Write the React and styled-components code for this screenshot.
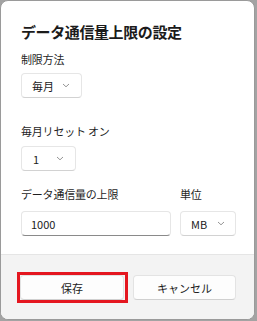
import React from "react";
import styled, { createGlobalStyle } from "styled-components";

const Global = createGlobalStyle`
  html, body { margin: 0; padding: 0; }
  body {
    background: #a3a3a3;
    font-family: "Noto Sans CJK JP", "Noto Sans", sans-serif;
    color: #1b1b1b;
  }
`;

const Dialog = styled.div`
  box-sizing: border-box;
  width: 255px;
  height: 320px;
  background: #ffffff;
  border: 1px solid #9a9a9a;
  border-radius: 8px;
  overflow: hidden;
  display: flex;
  flex-direction: column;
`;

const Body = styled.div`
  flex: 1;
  padding: 20px 18px 0 20px;
  display: flex;
  flex-direction: column;
`;

const Title = styled.h1`
  margin: 0 0 10px;
  font-size: 15px;
  line-height: 21px;
  font-weight: 600;
  letter-spacing: -0.4px;
`;

const Label = styled.div`
  font-size: 11px;
  line-height: 15px;
  color: #1f1f1f;
  margin-bottom: ${(p) => p.$mb || 6}px;
  letter-spacing: -0.2px;
`;

const Field = styled.div`
  box-sizing: border-box;
  width: ${(p) => p.$w}px;
  height: 25px;
  background: #fff;
  border: 1px solid #e6e6e6;
  border-bottom-color: #d2d2d2;
  border-radius: 4px;
  display: flex;
  align-items: center;
  justify-content: space-between;
  padding: 0 ${(p) => p.$pr || 11}px 0 ${(p) => p.$pl || 10}px;
  font-size: 11px;
  color: #1b1b1b;
  margin-bottom: ${(p) => p.$mb || 0}px;
`;

const Input = styled(Field)`
  border-bottom: 1px solid #8a8a8a;
  padding-left: 9px;
`;

const Group = styled.div`
  display: flex;
  flex-direction: column;
  align-items: flex-start;
`;

const Row = styled.div`
  display: grid;
  grid-template-columns: 150px 56px;
  column-gap: 9px;
`;

const Footer = styled.div`
  height: 65px;
  background: #f3f3f3;
  border-top: 1px solid #e5e5e5;
  box-sizing: border-box;
  display: flex;
  align-items: flex-start;
  gap: 5px;
  padding: 17px 0 0 16px;
`;

const FocusRing = styled.div`
  border: 3px solid #e4161f;
  padding: 0 1px 0 0;
  display: flex;
`;

const Button = styled.button`
  box-sizing: border-box;
  width: ${(p) => p.$w}px;
  height: 25px;
  margin-top: ${(p) => p.$mt || 0}px;
  background: #fdfdfd;
  border: 1px solid #e3e3e3;
  border-bottom-color: #d0d0d0;
  border-radius: 4px;
  font-family: inherit;
  font-size: 11px;
  color: #1b1b1b;
  padding: 0;
`;

const Chevron = () => (
  <svg width="8" height="5" viewBox="0 0 8 5">
    <path d="M1 1 L4 3.8 L7 1" fill="none" stroke="#7a7a7a" strokeWidth="0.8" />
  </svg>
);

export default function App() {
  return (
    <>
      <Global />
      <Dialog>
        <Body>
          <Title>データ通信量上限の設定</Title>
          <Group>
            <Label>制限方法</Label>
            <Field $w={61} $mb={26}>
              <span>毎月</span>
              <Chevron />
            </Field>
            <Label $mb={7}>毎月リセット オン</Label>
            <Field $w={55} $mb={16} $pl={11}>
              <span>1</span>
              <Chevron />
            </Field>
          </Group>
          <Row>
            <Label $mb={9}>データ通信量の上限</Label>
            <Label $mb={9}>単位</Label>
            <Input $w={150}>1000</Input>
            <Field $w={56} $pr={10}>
              <span>MB</span>
              <Chevron />
            </Field>
          </Row>
        </Body>
        <Footer>
          <FocusRing>
            <Button $w={104}>保存</Button>
          </FocusRing>
          <Button $w={103} $mt={3}>キャンセル</Button>
        </Footer>
      </Dialog>
    </>
  );
}
